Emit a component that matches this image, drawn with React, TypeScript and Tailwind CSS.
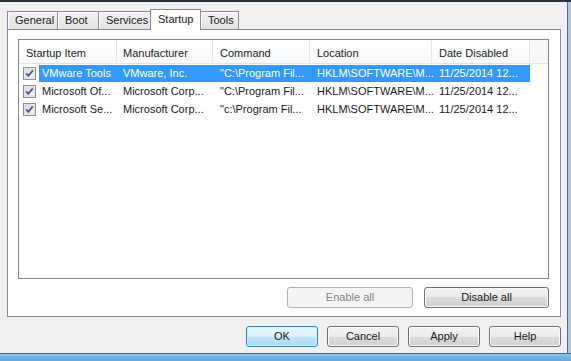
import React from 'react';

const rows = [
    { name: 'VMware Tools', maker: 'VMware, Inc.', command: '"C:\\Program Fil...', selected: true },
    { name: 'Microsoft Of...', maker: 'Microsoft Corp...', command: '"C:\\Program Fil...', selected: false },
    { name: 'Microsoft Se...', maker: 'Microsoft Corp...', command: '"c:\\Program Fil...', selected: false },
];

const tabs = [
    { label: 'General', w: 'w-[51px]' },
    { label: 'Boot', w: 'w-[42px]' },
    { label: 'Services', w: 'w-[53px]' },
    { label: 'Startup', w: 'w-[51px]', active: true },
    { label: 'Tools', w: 'w-[39px]' },
];

const CheckBox: React.FC = () => (
    <svg width="13" height="13" viewBox="0 0 13 13" className="shrink-0">
        <defs>
            <linearGradient id="cbg" x1="0" y1="0" x2="1" y2="1">
                <stop offset="0" stopColor="#dcdcdc" />
                <stop offset="1" stopColor="#fbfbfb" />
            </linearGradient>
        </defs>
        <rect x="0.5" y="0.5" width="12" height="12" fill="#f4f4f4" stroke="#8e8f8f" />
        <rect x="2" y="2" width="9" height="9" fill="url(#cbg)" stroke="#c6c6c6" strokeWidth="0.6" />
        <path d="M3.2 6.4 L5.4 8.8 L9.8 3.4" fill="none" stroke="#4a5c9a" strokeWidth="1.9" />
    </svg>
);

const Button: React.FC<{ label: string; w: string; variant?: 'default' | 'focus' | 'disabled' }> = ({ label, w, variant = 'default' }) => {
    const style =
        variant === 'focus'
            ? 'border-[#3c7fb1] bg-[linear-gradient(#eaf6fd_0%,#d9f0fc_50%,#bee6fd_50%,#a7d9f5_100%)] shadow-[inset_0_0_0_1px_#d8effb] text-[#1a1a1a]'
            : variant === 'disabled'
            ? 'border-[#adb2b5] bg-[#f4f4f4] text-[#838383]'
            : 'border-[#707070] bg-[linear-gradient(#f2f2f2_0%,#ebebeb_50%,#dddddd_50%,#cfcfcf_100%)] shadow-[inset_0_0_0_1px_#fbfbfb] text-[#1a1a1a]';
    return (
        <div className={`${w} h-[21px] rounded-[3px] border flex items-center justify-center ${style}`}>
            {label}
        </div>
    );
};

const App: React.FC = () => {
    return (
        <div className="w-[571px] h-[361px] bg-[#f0f0f0] overflow-hidden flex flex-col font-['Liberation_Sans',Arial,sans-serif] text-[11px] leading-none text-[#1a1a1a]">
            <div className="h-[2px] bg-[#27323c] shrink-0" />
            <div className="flex flex-1 min-h-0">
                <div className="flex-1 flex flex-col">
                    {/* tabs */}
                    <div className="flex items-end h-[27px] pl-[7px] pt-[6px]">
                        {tabs.map(t =>
                            t.active ? (
                                <div
                                    key={t.label}
                                    className={`${t.w} h-[21px] -ml-px -mb-px relative z-10 border border-b-0 border-[#898c95] bg-white flex items-start pt-[4px] pl-[7px]`}
                                >
                                    {t.label}
                                </div>
                            ) : (
                                <div
                                    key={t.label}
                                    className={`${t.w} h-[18px] -ml-px first:ml-0 border border-b-0 border-[#898c95] bg-[linear-gradient(#f3f3f3,#e2e2e2)] shadow-[inset_1px_1px_0_#fdfdfd] flex items-center pl-[7px]`}
                                >
                                    {t.label}
                                </div>
                            )
                        )}
                    </div>

                    {/* panel */}
                    <div className="ml-[7px] w-[554px] h-[288px] border border-[#898c95] bg-white pl-[10px] pt-[9px] flex flex-col">
                        <div className="w-[531px] h-[240px] border border-[#828790] bg-white flex flex-col">
                            <div className="h-[24px] flex border-b border-[#e5e5e5] bg-[linear-gradient(#ffffff,#f7f8fa)] text-[#1e1e1e]">
                                <div className="w-[98px] border-r border-[#e5e5e5] flex items-center pt-[4px] pl-[7px]">Startup Item</div>
                                <div className="w-[96px] border-r border-[#e5e5e5] flex items-center pt-[4px] pl-[6px]">Manufacturer</div>
                                <div className="w-[97px] border-r border-[#e5e5e5] flex items-center pt-[4px] pl-[7px]">Command</div>
                                <div className="w-[122px] border-r border-[#e5e5e5] flex items-center pt-[4px] pl-[7px]">Location</div>
                                <div className="w-[98px] border-r border-[#e5e5e5] flex items-center pt-[4px] pl-[7px]">Date Disabled</div>
                                <div className="flex-1 bg-[#f7f7f7]" />
                            </div>
                            {rows.map(r => (
                                <div key={r.name} className="h-[18px] flex items-end">
                                    <div className="w-[20px] h-[18px] flex items-center pl-[4px]">
                                        <CheckBox />
                                    </div>
                                    <div
                                        className={`h-[17px] flex items-center ${r.selected ? 'bg-[#3399ff] text-white' : ''}`}
                                    >
                                        <div className="w-[78px] pl-[3px] whitespace-nowrap">{r.name}</div>
                                        <div className="w-[96px] pl-[6px] whitespace-nowrap">{r.maker}</div>
                                        <div className="w-[97px] pl-[7px] whitespace-nowrap">{r.command}</div>
                                        <div className="w-[122px] pl-[7px] whitespace-nowrap">{'HKLM\\SOFTWARE\\M...'}</div>
                                        <div className="w-[98px] pl-[7px] whitespace-nowrap">11/25/2014 12...</div>
                                    </div>
                                </div>
                            ))}
                        </div>
                        <div className="w-[531px] flex justify-end gap-[11px] mt-[8px]">
                            <Button label="Enable all" w="w-[126px]" variant="disabled" />
                            <Button label="Disable all" w="w-[125px]" />
                        </div>
                    </div>

                    {/* dialog buttons */}
                    <div className="flex justify-end gap-[9px] pr-[6px] mt-[9px]">
                        <Button label="OK" w="w-[72px]" variant="focus" />
                        <Button label="Cancel" w="w-[72px]" />
                        <Button label="Apply" w="w-[72px]" />
                        <Button label="Help" w="w-[72px]" />
                    </div>
                </div>
                <div className="w-[4px] flex shrink-0">
                    <div className="w-px bg-[#5a6b80]" />
                    <div className="flex-1 bg-[#a9c8e4]" />
                </div>
            </div>
            <div className="h-[8px] shrink-0 border-t border-[#3a6a96] bg-[linear-gradient(#8cc4ea,#6aa6d6)]" />
        </div>
    );
};

export default App;
